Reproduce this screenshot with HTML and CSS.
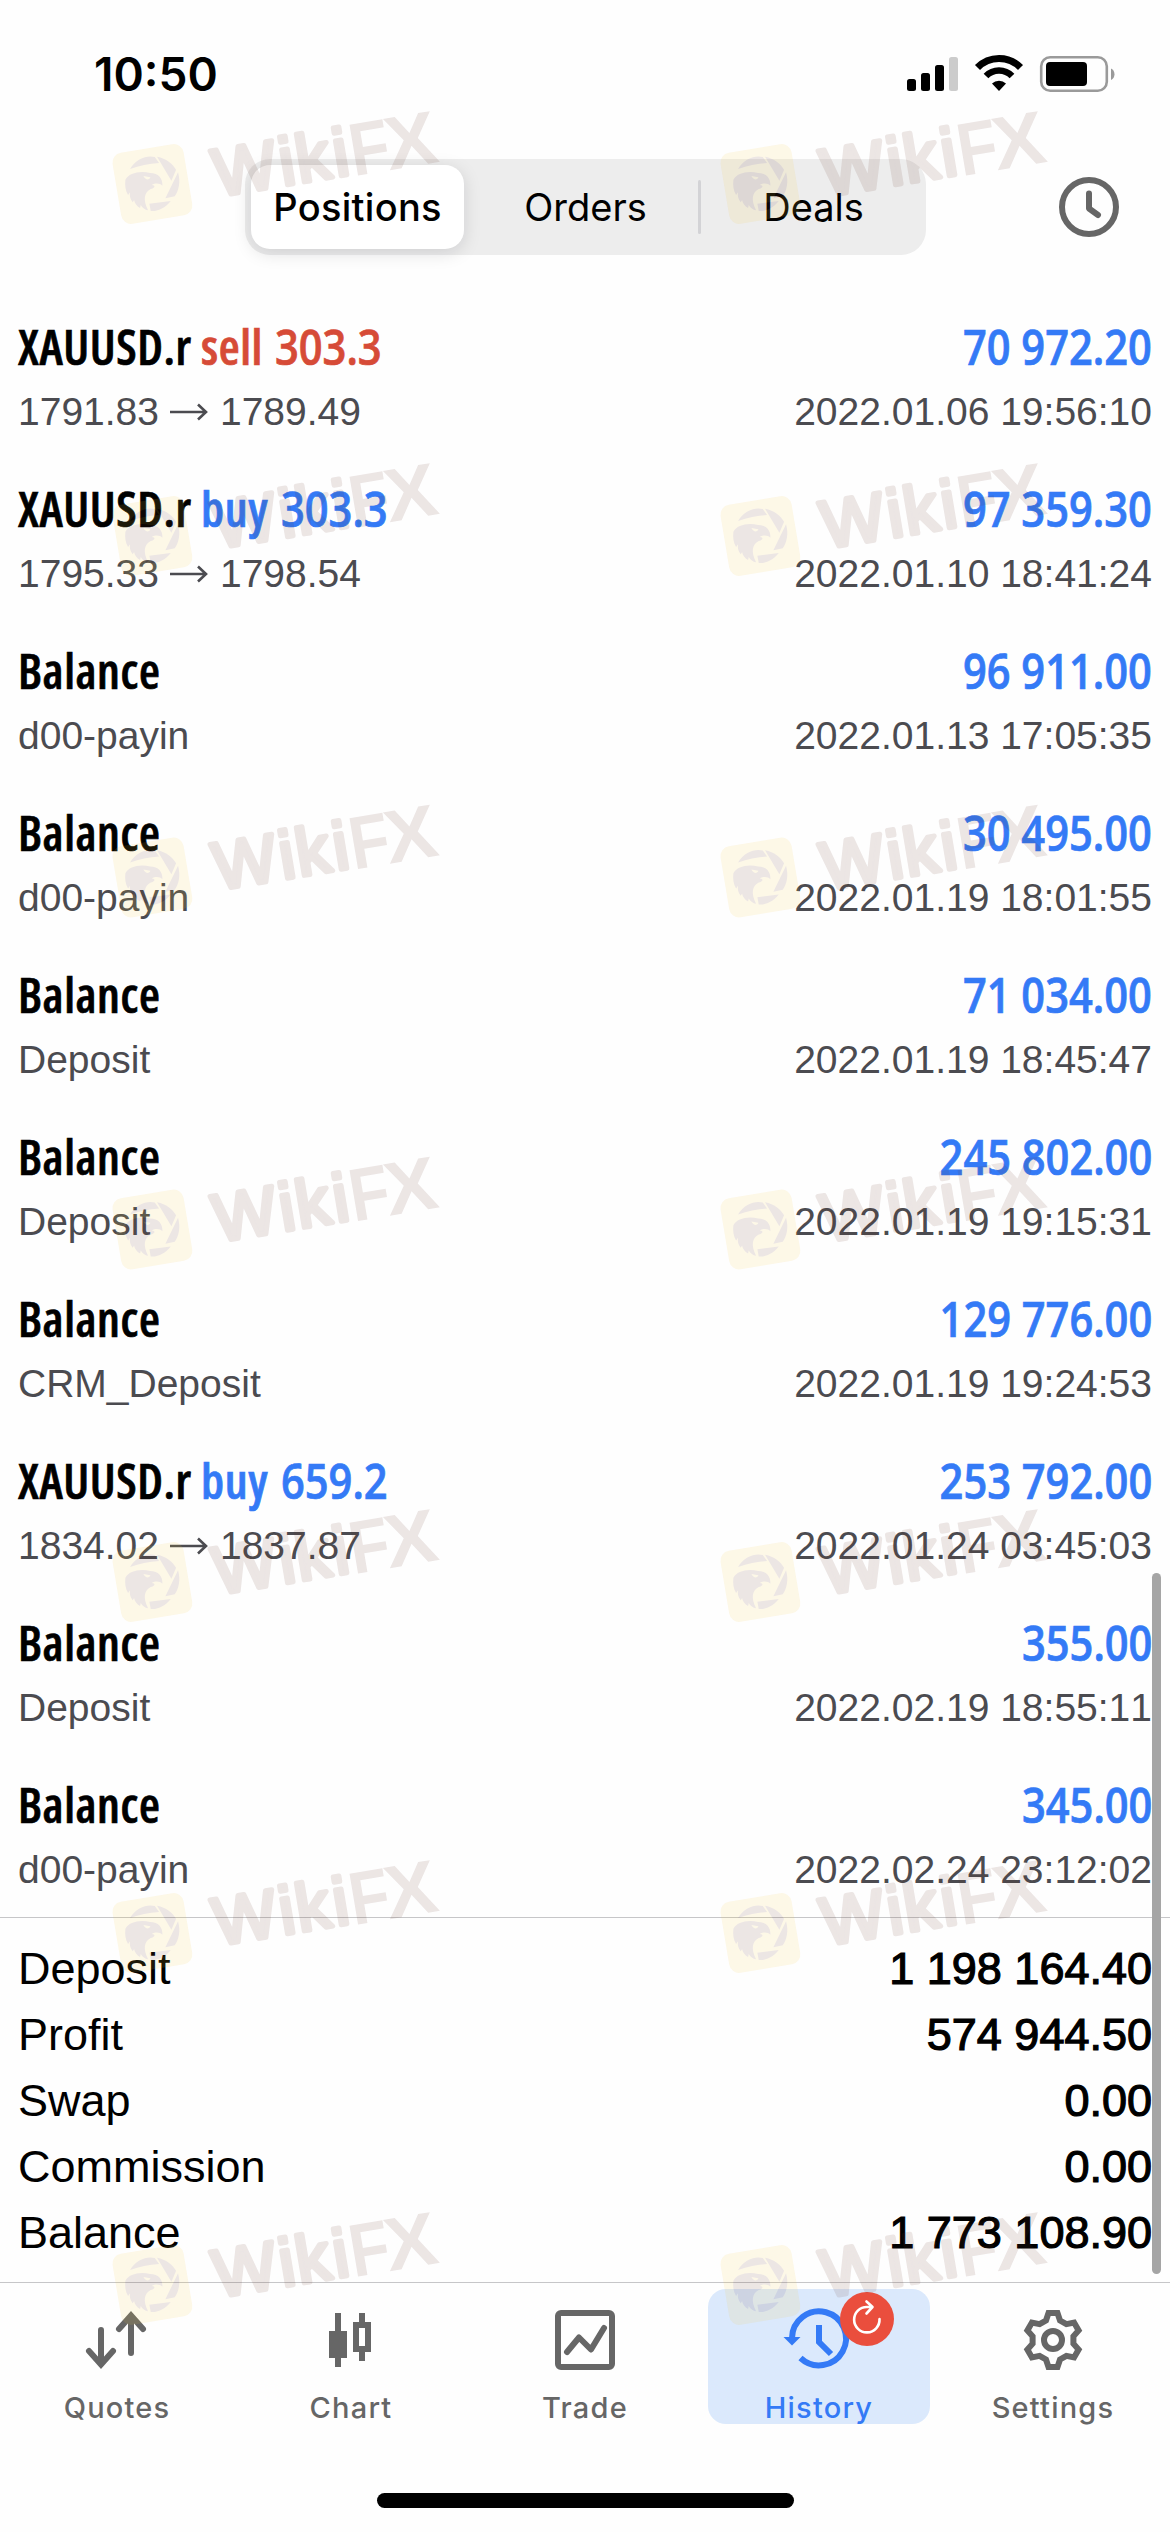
FILE: index.html
```html
<!DOCTYPE html>
<html lang="en">
<head>
<meta charset="utf-8">
<title>History</title>
<link rel="stylesheet" href="styles.css">
</head>
<body>
<div class="screen">
  <header class="status-bar">
    <span class="time">10:50</span>
    <svg class="status-icons" width="210" height="40" viewBox="0 0 210 40">
      <rect x="1" y="25" width="9" height="12" rx="2.5"/>
      <rect x="15" y="19" width="9" height="18" rx="2.5"/>
      <rect x="29" y="11" width="9" height="26" rx="2.5"/>
      <rect x="43" y="3" width="9" height="34" rx="2.5" fill="#ccc"/>
      <path d="M71.5 13.500a30 30 0 0 1 43 0" fill="none" stroke="#000" stroke-width="7"/>
      <path d="M80 22a18 18 0 0 1 26 0" fill="none" stroke="#000" stroke-width="6.500"/>
      <path d="M93 37l-7-7.500a10 10 0 0 1 14 0z"/>
      <rect x="135.200" y="3.200" width="65.600" height="33.600" rx="9" fill="none" stroke="#9a9a9a" stroke-width="2.600"/>
      <rect x="140" y="8" width="41" height="24" rx="4"/>
      <path d="M205 14.500a6.500 6.500 0 0 1 0 11.500z" fill="#9a9a9a"/>
    </svg>
  </header>

  <nav class="top-bar">
    <div class="segments">
      <span class="segment selected">Positions</span>
      <span class="segment">Orders</span>
      <span class="segment divided">Deals</span>
    </div>
    <svg class="clock" width="60" height="60" viewBox="0 0 60 60">
      <circle cx="30" cy="30" r="27"/>
      <path d="M30 16.500v15l9 6.500" stroke-linecap="round" stroke-linejoin="round"/>
    </svg>
  </nav>

  <main class="deals">
    <article class="deal">
      <div class="line main"><span>XAUUSD.r <b class="sell">sell <i>303.3</i></b></span><span class="amount">70 972.20</span></div>
      <div class="line sub"><span class="prices">1791.83<svg class="arrow" viewBox="0 0 38 18"><path d="M0 9h36M28 1.500l8 7.500-8 7.500"/></svg>1789.49</span><span>2022.01.06 19:56:10</span></div>
    </article>
    <article class="deal">
      <div class="line main"><span>XAUUSD.r <b class="buy">buy <i>303.3</i></b></span><span class="amount">97 359.30</span></div>
      <div class="line sub"><span class="prices">1795.33<svg class="arrow" viewBox="0 0 38 18"><path d="M0 9h36M28 1.500l8 7.500-8 7.500"/></svg>1798.54</span><span>2022.01.10 18:41:24</span></div>
    </article>
    <article class="deal">
      <div class="line main"><span>Balance</span><span class="amount">96 911.00</span></div>
      <div class="line sub"><span>d00-payin</span><span>2022.01.13 17:05:35</span></div>
    </article>
    <article class="deal">
      <div class="line main"><span>Balance</span><span class="amount">30 495.00</span></div>
      <div class="line sub"><span>d00-payin</span><span>2022.01.19 18:01:55</span></div>
    </article>
    <article class="deal">
      <div class="line main"><span>Balance</span><span class="amount">71 034.00</span></div>
      <div class="line sub"><span>Deposit</span><span>2022.01.19 18:45:47</span></div>
    </article>
    <article class="deal">
      <div class="line main"><span>Balance</span><span class="amount">245 802.00</span></div>
      <div class="line sub"><span>Deposit</span><span>2022.01.19 19:15:31</span></div>
    </article>
    <article class="deal">
      <div class="line main"><span>Balance</span><span class="amount">129 776.00</span></div>
      <div class="line sub"><span>CRM_Deposit</span><span>2022.01.19 19:24:53</span></div>
    </article>
    <article class="deal">
      <div class="line main"><span>XAUUSD.r <b class="buy">buy <i>659.2</i></b></span><span class="amount">253 792.00</span></div>
      <div class="line sub"><span class="prices">1834.02<svg class="arrow" viewBox="0 0 38 18"><path d="M0 9h36M28 1.500l8 7.500-8 7.500"/></svg>1837.87</span><span>2022.01.24 03:45:03</span></div>
    </article>
    <article class="deal">
      <div class="line main"><span>Balance</span><span class="amount">355.00</span></div>
      <div class="line sub"><span>Deposit</span><span>2022.02.19 18:55:11</span></div>
    </article>
    <article class="deal">
      <div class="line main"><span>Balance</span><span class="amount">345.00</span></div>
      <div class="line sub"><span>d00-payin</span><span>2022.02.24 23:12:02</span></div>
    </article>
  </main>

  <section class="summary">
    <div class="total"><span>Deposit</span><span class="value">1 198 164.40</span></div>
    <div class="total"><span>Profit</span><span class="value">574 944.50</span></div>
    <div class="total"><span>Swap</span><span class="value">0.00</span></div>
    <div class="total"><span>Commission</span><span class="value">0.00</span></div>
    <div class="total"><span>Balance</span><span class="value">1 773 108.90</span></div>
  </section>

  <nav class="tab-bar">
    <div class="tab">
      <svg class="icon" viewBox="0 0 60 60"><g stroke-linecap="round"><path d="M14 20v34M2 41l12 13.500L26 41M44 43V6M32 19L44 5.500 56 19"/></g></svg>
      <span>Quotes</span>
    </div>
    <div class="tab">
      <svg class="icon" viewBox="0 0 60 60"><path d="M8 21h18v27H8z" fill="#666" stroke="none"/><path d="M17 3v54M41 3v12M41 39v12M35 15h12v24H35z"/></svg>
      <span>Chart</span>
    </div>
    <div class="tab">
      <svg class="icon" viewBox="0 0 60 60"><rect x="3" y="3" width="54" height="54" rx="3"/><path d="M12 42l12-14.500 12 12L49 18" stroke-linecap="round" stroke-linejoin="round"/></svg>
      <span>Trade</span>
    </div>
    <div class="tab active">
      <svg class="icon" viewBox="0 0 60 60"><path d="M3 28a27 27 0 1 1 8.500 20M30 15v17l12 12"/><path d="M-5.500 27h17L3 35.500z" fill="#347af6" stroke="none"/></svg>
      <span>History</span>
      <svg class="badge" width="54" height="54" viewBox="0 0 54 54"><circle cx="27" cy="27" r="27" fill="#ea4e3d"/><path d="M39.500 27A12.700 12.700 0 1 1 27 15h5M26.500 9.500l6 5.500-6 6.500" fill="none" stroke="#fff" stroke-width="2.600" stroke-linecap="round" stroke-linejoin="round"/></svg>
    </div>
    <div class="tab">
      <svg class="icon" viewBox="-30 -30 60 60"><path d="M-7-19.500L-4.500-27H4.500L7-19.500 13.400-15.800 21.100-17.400 25.600-9.600 20.400-3.700V3.700L25.600 9.600 21.100 17.400 13.400 15.800 7 19.500 4.500 27H-4.500L-7 19.500-13.400 15.800-21.100 17.400-25.600 9.600-20.400 3.700V-3.700L-25.600-9.600-21.100-17.400-13.400-15.800z"/><circle r="9"/></svg>
      <span>Settings</span>
    </div>
  </nav>
  <div class="home-indicator"></div>

  <div class="scrollbar"></div>

  <svg class="watermarks" width="1170" height="2532" viewBox="0 0 1170 2532">
    <defs>
      <g id="mark">
        <g transform="rotate(-9.500)">
          <rect x="-36" y="-36" width="72" height="72" rx="10" fill="#f5c840"/>
          <g fill="#643228" font-family="'Liberation Sans', Arial, sans-serif">
            <text x="62 128.500 145.500 183" y="23" font-size="67" stroke="#643228" stroke-width="4.800" stroke-linejoin="round">Wiki</text>
            <text x="200" y="25.500" font-size="75" font-weight="700" textLength="40" lengthAdjust="spacingAndGlyphs">F</text>
            <text x="236" y="25.500" font-size="75" font-weight="700" textLength="52" lengthAdjust="spacingAndGlyphs">X</text>
          </g>
        </g>
        <g transform="scale(.3333) translate(-127 -145)" fill="#643228">
          <path d="M46 132C56 112 90 104 120 112 145 112 158 128 157 150 150 142 135 142 125 148 140 150 132 158 122 160 102 170 98 192 114 224 105 222 97 217 92 208L90 217C80 212 74 203 72 193L68 200C60 190 58 180 60 170L54 178C46 165 44 148 46 132Z"/>
          <path d="M60 100C78 68 112 58 134 64L147 82C115 84 88 90 60 100Z"/>
          <path d="M141 63C168 68 188 85 198 102L184 135Z"/>
          <path d="M204 110C212 140 206 165 194 182L166 188Z"/>
          <path d="M118 204L182 196C166 216 144 228 122 226Z"/>
          <path d="M100 121L121 125C118 134 106 134 100 121Z" fill="#f5c840"/>
        </g>
      </g>
    </defs>
    <g class="marks">
      <use href="#mark" x="152.400" y="184"/><use href="#mark" x="760.400" y="184"/>
      <use href="#mark" x="152.400" y="536"/><use href="#mark" x="760.400" y="536"/>
      <use href="#mark" x="152.400" y="877.500"/><use href="#mark" x="760.400" y="877.500"/>
      <use href="#mark" x="152.400" y="1229.500"/><use href="#mark" x="760.400" y="1229.500"/>
      <use href="#mark" x="152.400" y="1582"/><use href="#mark" x="760.400" y="1582"/>
      <use href="#mark" x="152.400" y="1933"/><use href="#mark" x="760.400" y="1933"/>
      <use href="#mark" x="152.400" y="2285"/><use href="#mark" x="760.400" y="2285"/>
    </g>
  </svg>
</div>
</body>
</html>
```
FILE: styles.css
```css
* { box-sizing: border-box; }

body {
  margin: 0;
  background: #fefefe;
  color: #000;
  font-family: Inter, "Liberation Sans", sans-serif;
}

.screen {
  position: relative;
  display: flex;
  flex-direction: column;
  width: 1170px;
  height: 2532px;
  overflow: hidden;
}

.status-bar {
  display: flex;
  justify-content: space-between;
  height: 159px;
  padding: 44px 54px 0 94px;
}

.time {
  font-size: 46px;
  font-weight: 600;
  line-height: 60px;
}

.status-icons { margin-top: 10px; }

.top-bar {
  display: flex;
  align-items: center;
  height: 96px;
  padding-left: 245px;
}

.segments {
  display: grid;
  grid-template-columns: repeat(3, 1fr);
  gap: 15px;
  width: 681px;
  height: 96px;
  padding: 6px;
  border-radius: 25px;
  background: #ededed;
}

.segment {
  position: relative;
  font-size: 38px;
  line-height: 84px;
  text-align: center;
}

.selected {
  border-radius: 19px;
  background: #fff;
  box-shadow: 0 4px 18px rgba(0, 0, 20, .13);
  font-weight: 500;
  letter-spacing: .3px;
}

.divided::before {
  content: "";
  position: absolute;
  left: -9px;
  top: 15px;
  width: 3px;
  height: 54px;
  border-radius: 2px;
  background: #d3d3d6;
}

.clock {
  margin-left: 133px;
  fill: none;
  stroke: #666;
  stroke-width: 6;
}

.deals { padding-top: 42px; }

.deal {
  height: 162px;
  padding: 20px 18px 0;
}

.line {
  display: flex;
  justify-content: space-between;
  white-space: pre;
}

.main {
  font-family: "Open Sans", "Noto Sans", sans-serif;
  font-size: 48px;
  font-weight: 600;
  font-stretch: 75%;
  line-height: 60px;
  letter-spacing: .6px;
  -webkit-text-stroke: .7px currentColor;
}

.main b { font-weight: inherit; }

/* Figures are set wider than the condensed labels beside them. */
.main i,
.amount {
  display: inline-block;
  font-style: normal;
  font-stretch: 100%;
  letter-spacing: 0;
  transform: scaleX(.867);
  transform-origin: left;
}

.main i { margin-left: 3px; }

.amount { transform-origin: right; }

.sell { color: #d64b37; }
.buy, .amount { color: #347af6; }

.sub {
  margin-top: 10px;
  color: #4b4b50;
  font-family: "Liberation Sans", Arial, sans-serif;
  font-size: 39px;
  font-kerning: none;
  line-height: 50px;
}

.prices {
  display: flex;
  align-items: center;
}

.arrow {
  width: 38px;
  height: 18px;
  margin: 0 12px 0 11px;
  fill: none;
  stroke: #4b4b50;
  stroke-width: 2.6;
}

.summary {
  height: 366px;
  padding: 18px 18px 0;
  border-top: 1px solid #c6c6c8;
  border-bottom: 1px solid #c6c6c8;
  font-family: "Liberation Sans", Arial, sans-serif;
  font-size: 45px;
  font-kerning: none;
  line-height: 66px;
}

.total {
  display: flex;
  justify-content: space-between;
}

.value { -webkit-text-stroke: 1.2px #000; }

.tab-bar {
  display: grid;
  grid-template-columns: repeat(5, 222px);
  justify-content: space-around;
  height: 141px;
  padding-top: 6px;
}

.tab {
  position: relative;
  display: flex;
  flex-direction: column;
  align-items: center;
  gap: 21px;
  padding-top: 21px;
  color: #666;
  font-size: 29px;
  font-weight: 450;
  line-height: 33px;
  letter-spacing: 1.2px;
}

.active {
  border-radius: 18px;
  background: #dbe9fc;
  color: #347af6;
}

.icon {
  width: 60px;
  height: 60px;
  overflow: visible;
  fill: none;
  stroke: #666;
  stroke-width: 6;
}

.active .icon { stroke: #347af6; }

.badge {
  position: absolute;
  left: 132px;
  top: 3px;
}

.home-indicator {
  width: 417px;
  height: 15px;
  margin: 69px auto 0;
  border-radius: 8px;
  background: #000;
}

.scrollbar {
  position: absolute;
  left: 1152px;
  top: 1573px;
  width: 9px;
  height: 701px;
  border-radius: 5px;
  background: #a5a5a5;
}

.watermarks {
  position: absolute;
  left: 0;
  top: 0;
}

.marks { opacity: .12; }
```
